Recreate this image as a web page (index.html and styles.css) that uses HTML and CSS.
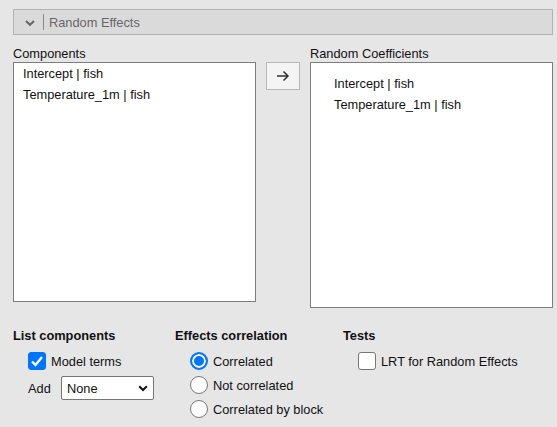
FILE: index.html
```html
<!DOCTYPE html>
<html>
<head>
<meta charset="utf-8">
<link rel="stylesheet" href="styles.css">
</head>
<body>
<div class="page">
  <div class="section-header">
    <svg class="chevron" width="12" height="8" viewBox="0 0 12 8"><path d="M2 2 L6 5.8 L10 2" fill="none" stroke="#666" stroke-width="2"/></svg>
    <span class="divider"></span>
    <span class="section-title">Random Effects</span>
  </div>

  <div class="lists">
    <div class="list-col">
      <div class="list-label">Components</div>
      <div class="listbox left-box">
        <div class="item">Intercept | fish</div>
        <div class="item">Temperature_1m | fish</div>
      </div>
    </div>
    <div class="btn-col">
      <div class="move-btn">
        <svg width="14" height="12" viewBox="0 0 14 12"><path d="M1 6 H12 M7.5 1.5 L12 6 L7.5 10.5" fill="none" stroke="#333" stroke-width="1.5"/></svg>
      </div>
    </div>
    <div class="list-col">
      <div class="list-label">Random Coefficients</div>
      <div class="listbox right-box">
        <div class="item">Intercept | fish</div>
        <div class="item">Temperature_1m | fish</div>
      </div>
    </div>
  </div>

  <div class="options">
    <div class="opt-col col1">
      <div class="opt-title">List components</div>
      <div class="opt-body">
        <div class="row">
          <span class="check checked">
            <svg width="14" height="12" viewBox="0 0 14 12"><path d="M2 6.5 L5.5 10 L12 2" fill="none" stroke="#fff" stroke-width="2.4"/></svg>
          </span>
          <span class="lbl">Model terms</span>
        </div>
        <div class="row add-row">
          <span class="add-lbl">Add</span>
          <div class="select">
            <span>None</span>
            <svg width="10" height="7" viewBox="0 0 10 7"><path d="M1.2 1.2 L5 5 L8.8 1.2" fill="none" stroke="#111" stroke-width="2"/></svg>
          </div>
        </div>
      </div>
    </div>
    <div class="opt-col col2">
      <div class="opt-title">Effects correlation</div>
      <div class="opt-body">
        <div class="row"><span class="radio on"></span><span class="lbl">Correlated</span></div>
        <div class="row"><span class="radio"></span><span class="lbl">Not correlated</span></div>
        <div class="row"><span class="radio"></span><span class="lbl">Correlated by block</span></div>
      </div>
    </div>
    <div class="opt-col col3">
      <div class="opt-title">Tests</div>
      <div class="opt-body">
        <div class="row"><span class="check"></span><span class="lbl">LRT for Random Effects</span></div>
      </div>
    </div>
  </div>
</div>
</body>
</html>
```

FILE: styles.css
```css
* { box-sizing: border-box; }
html, body {
  margin: 0;
  padding: 0;
  background: #e6e6e6;
  font-family: "Liberation Sans", Arial, sans-serif;
  font-size: 12.8px;
  color: #111;
}
.page {
  padding: 9px 4px 0 13px;
}
.section-header {
  height: 26px;
  border: 1px solid #b3b3b3;
  background: #dadada;
  display: flex;
  align-items: center;
  padding-left: 10px;
}
.chevron { margin-top: 2px; }
.divider {
  width: 1px;
  height: 16px;
  background: #888;
  margin-left: 7px;
  margin-right: 5px;
}
.section-title {
  color: #666;
}
.lists {
  display: flex;
  margin-top: 9px;
  align-items: flex-start;
}
.list-col {
  width: 243px;
  display: flex;
  flex-direction: column;
}
.list-label {
  line-height: 16px;
  height: 18px;
  padding-top: 2px;
}
.listbox {
  background: #fff;
  border: 1px solid #7d7d7d;
}
.left-box {
  height: 240px;
  padding-left: 9px;
}
.right-box {
  height: 246px;
  padding-left: 23px;
  padding-top: 10px;
}
.item {
  line-height: 21px;
  height: 21px;
}
.btn-col {
  width: 54px;
  padding: 18px 10px 0 10px;
}
.move-btn {
  width: 34px;
  height: 28px;
  background: #f4f4f4;
  border: 1px solid #b8b8b8;
  display: flex;
  align-items: center;
  justify-content: center;
}
.options {
  display: flex;
  margin-top: 20px;
}
.opt-title {
  font-weight: bold;
  line-height: 16px;
  height: 16px;
}
.col1 { width: 162px; }
.col2 { width: 168px; }
.col3 { flex: 1; }
.opt-body {
  margin-top: 5px;
  padding-left: 15px;
}
.row {
  display: flex;
  align-items: center;
  height: 24px;
}
.lbl { margin-left: 5px; }
.check {
  width: 18px;
  height: 18px;
  border: 1px solid #767676;
  border-radius: 3px;
  background: #fff;
  display: flex;
  align-items: center;
  justify-content: center;
}
.check.checked {
  background: #0075ff;
  border-color: #0075ff;
}
.radio {
  width: 18px;
  height: 18px;
  border-radius: 50%;
  border: 1px solid #767676;
  background: #fff;
}
.radio.on {
  border: 2px solid #0075ff;
  box-shadow: inset 0 0 0 2px #fff;
  background: #0075ff;
}
.add-row {
  margin-top: 3px;
}
.add-lbl { width: 33px; }
.select {
  width: 93px;
  height: 24px;
  border: 1px solid #767676;
  border-radius: 2px;
  background: #fff;
  display: flex;
  align-items: center;
  justify-content: space-between;
  padding: 0 5px 0 5px;
}
```
